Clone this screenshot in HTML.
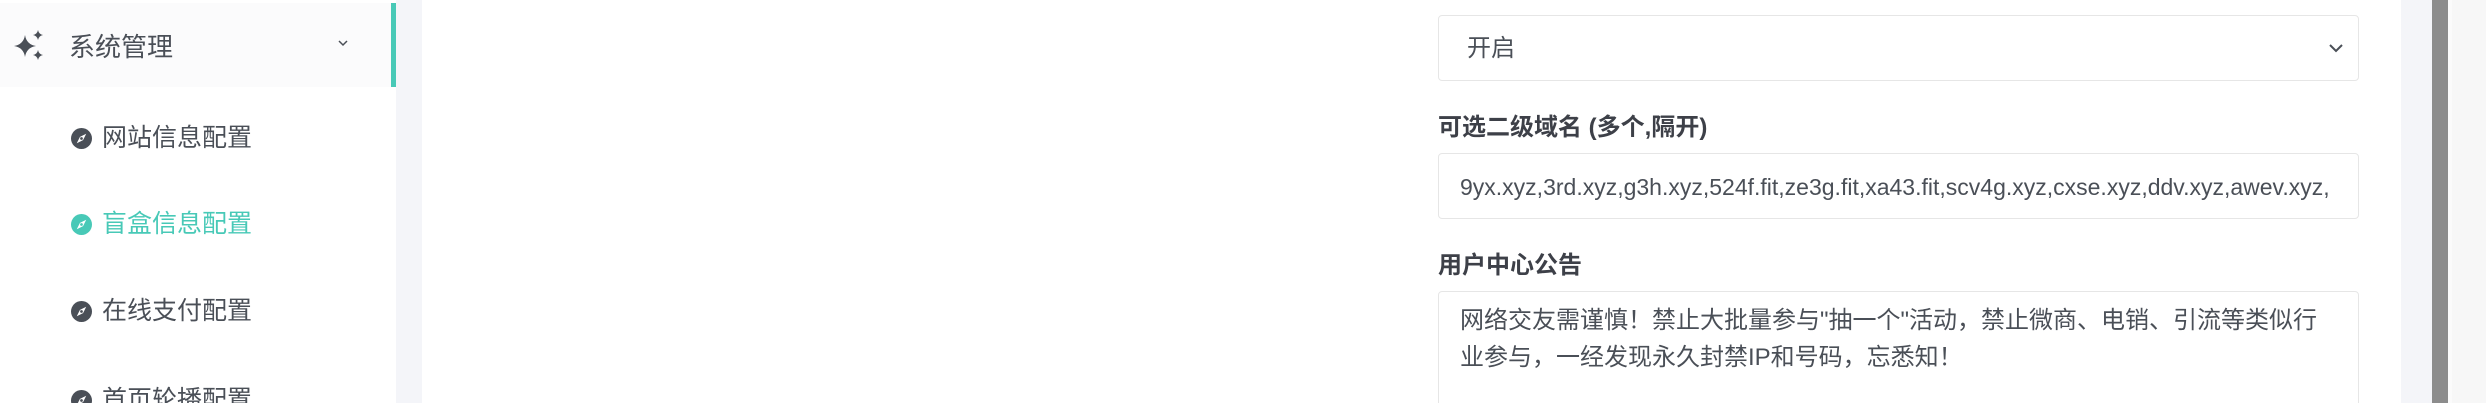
<!DOCTYPE html>
<html style="overflow:hidden;height:403px"><head><meta charset="utf-8"><style>
*{margin:0;padding:0;box-sizing:border-box}
body{width:2486px;height:403px;background:#fff;font-family:"Liberation Sans","Noto Sans CJK SC",sans-serif;color:#4a4f57}
#w{position:relative;width:2486px;height:403px;overflow:hidden}
.abs{position:absolute}
.side{left:0;top:0;width:396px;height:403px;background:#fff}
.head{left:0;top:3px;width:396px;height:84px;background:#fbfbfc}
.bar{left:391px;top:3px;width:5px;height:84px;background:#48c9b7}
.gap{left:396px;top:0;width:26px;height:403px;background:#f4f5f9}
.t1{left:69px;top:30px;font-size:26px;line-height:34px;color:#4a4f57}
.item{left:71px;font-size:25px;line-height:34px;color:#4a4f57;display:flex;align-items:center}
.item svg{margin-right:10px}
.teal{color:#48c9b7}
.field{left:1438px;width:921px;border:1px solid #e6e6e6;border-radius:4px;background:#fff}
.lab{left:1438px;font-size:24px;font-weight:bold;color:#3d4048;line-height:30px}
.txt{font-size:24px;color:#4a4f57;white-space:nowrap;overflow:hidden}
</style></head><body><div id="w">
<div class="abs side"></div>
<div class="abs head"></div>
<div class="abs bar"></div>
<div class="abs gap"></div>
<svg class="abs" style="left:12px;top:30px" width="34" height="34" viewBox="0 0 34 34">
<path fill="#4a4f57" d="M13 5 Q14.5 14.5 24 16 Q14.5 17.5 13 27 Q11.5 17.5 2 16 Q11.5 14.5 13 5Z"/>
<path fill="#4a4f57" d="M26 0 Q26.8 4.2 31 5 Q26.8 5.8 26 10 Q25.2 5.8 21 5 Q25.2 4.2 26 0Z"/>
<path fill="#4a4f57" d="M26 20 Q26.8 24.2 31 25 Q26.8 25.8 26 30 Q25.2 25.8 21 25 Q25.2 24.2 26 20Z"/>
</svg>
<div class="abs t1">系统管理</div>
<svg class="abs" style="left:337px;top:38px" width="12" height="10" viewBox="0 0 12 10"><path d="M2 3l4 4 4-4" stroke="#4a4f57" stroke-width="1.5" fill="none"/></svg>

<div class="abs item" style="top:121px"><svg width="21" height="21" viewBox="0 0 20 20"><circle cx="10" cy="10" r="10" fill="#4a4f57"/><path d="M14.5 5.5 L11.5 11.5 L5.5 14.5 L8.5 8.5Z" fill="#fff"/><circle cx="10" cy="10" r="1.3" fill="#4a4f57"/></svg>网站信息配置</div>
<div class="abs item teal" style="top:207px"><svg width="21" height="21" viewBox="0 0 20 20"><circle cx="10" cy="10" r="10" fill="#48c9b7"/><path d="M14.5 5.5 L11.5 11.5 L5.5 14.5 L8.5 8.5Z" fill="#fff"/><circle cx="10" cy="10" r="1.3" fill="#48c9b7"/></svg>盲盒信息配置</div>
<div class="abs item" style="top:294px"><svg width="21" height="21" viewBox="0 0 20 20"><circle cx="10" cy="10" r="10" fill="#4a4f57"/><path d="M14.5 5.5 L11.5 11.5 L5.5 14.5 L8.5 8.5Z" fill="#fff"/><circle cx="10" cy="10" r="1.3" fill="#4a4f57"/></svg>在线支付配置</div>
<div class="abs item" style="top:383px"><svg width="21" height="21" viewBox="0 0 20 20"><circle cx="10" cy="10" r="10" fill="#4a4f57"/><path d="M14.5 5.5 L11.5 11.5 L5.5 14.5 L8.5 8.5Z" fill="#fff"/><circle cx="10" cy="10" r="1.3" fill="#4a4f57"/></svg>首页轮播配置</div>

<div class="abs lab" style="top:-26px">短信验证开关</div>
<div class="abs field" style="top:15px;height:66px"><div class="abs txt" style="left:28px;top:16px;line-height:34px">开启</div>
<svg class="abs" style="right:14px;top:26px" width="16" height="12" viewBox="0 0 16 12"><path d="M2 3l6 6 6-6" stroke="#4a4f57" stroke-width="2" fill="none"/></svg></div>

<div class="abs lab" style="top:113px">可选二级域名 (多个,隔开)</div>
<div class="abs field" style="top:153px;height:66px"><div class="abs txt" style="left:21px;top:16px;line-height:34px;width:880px;font-size:23px">9yx.xyz,3rd.xyz,g3h.xyz,524f.fit,ze3g.fit,xa43.fit,scv4g.xyz,cxse.xyz,ddv.xyz,awev.xyz,</div></div>

<div class="abs lab" style="top:251px">用户中心公告</div>
<div class="abs field" style="top:291px;height:200px"><div class="abs" style="left:21px;top:10px;width:880px;font-size:24px;line-height:37px;color:#4a4f57">网络交友需谨慎！禁止大批量参与"抽一个"活动，禁止微商、电销、引流等类似行业参与，一经发现永久封禁IP和号码，忘悉知！</div></div>

<div class="abs" style="left:2401px;top:0;width:31px;height:403px;background:#f4f5f9"></div>
<div class="abs" style="left:2432px;top:0;width:16px;height:403px;background:#8c8c8c"></div>
<div class="abs" style="left:2448px;top:0;width:4px;height:403px;background:#fbfbfb"></div>
<div class="abs" style="left:2452px;top:0;width:34px;height:403px;background:#f7f7f7"></div>
</div></body></html>
